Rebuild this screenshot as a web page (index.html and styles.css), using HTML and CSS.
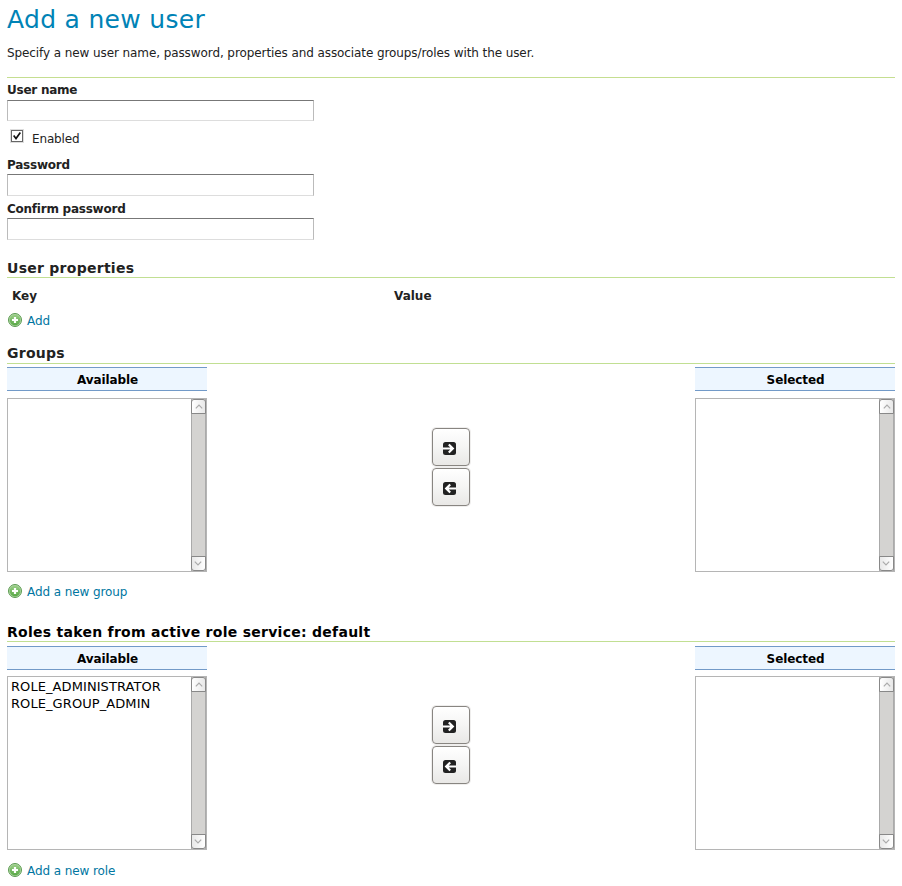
FILE: index.html
```html
<!DOCTYPE html>
<html lang="en">
<head>
<meta charset="utf-8">
<title>Add a new user</title>
<link rel="stylesheet" href="styles.css">
</head>
<body>
<svg class="defs" width="0" height="0">
  <defs>
    <linearGradient id="green" x1="0" y1="0" x2="0" y2="1"><stop offset="0" stop-color="#9bcf88"/><stop offset="1" stop-color="#58a845"/></linearGradient>
    <symbol id="plus" viewBox="0 0 14 14"><circle cx="7" cy="7" r="6.5" fill="#b5d9a9" stroke="#5b9a50"/><circle cx="7" cy="7" r="5.4" fill="url(#green)"/><path d="M7 4v6M4 7h6" stroke="#fff" stroke-width="2.2"/></symbol>
    <symbol id="arrow" viewBox="0 0 13 13"><rect width="13" height="13" rx="2.5" fill="#222"/><path d="M0 6.5h9.5M5.8 2.5l4 4-4 4" fill="none" stroke="#fff" stroke-width="2.2"/></symbol>
    <symbol id="chevron" viewBox="0 0 8 5"><path d="M.8 4.3L4 1.1l3.2 3.2" fill="none" stroke="#aaa" stroke-width="1.2"/></symbol>
  </defs>
</svg>
<main>
  <h1><span>Add a new user</span></h1>
  <p class="intro"><span>Specify a new user name, password, properties and associate groups/roles with the user.</span></p>
  <form>
    <label class="label" for="name">User name</label>
    <input class="field first" id="name" type="text">
    <label class="check"><span class="box"><svg viewBox="0 0 12 12"><path d="M2 5.5L4.8 9 10 1.8" fill="none" stroke="#111" stroke-width="2"/></svg></span><span>Enabled</span></label>
    <label class="label" for="pass">Password</label>
    <input class="field" id="pass" type="password">
    <label class="label" for="confirm">Confirm password</label>
    <input class="field" id="confirm" type="password">

    <h2 class="props">User properties</h2>
    <div class="columns"><b>Key</b><b>Value</b></div>
    <a class="add"><svg><use href="#plus"/></svg><span>Add</span></a>

    <h2 class="groups">Groups</h2>
    <section class="palette">
      <div class="side"><h3>Available</h3><div class="list"><div class="options"></div><div class="bar"><i><svg><use href="#chevron"/></svg></i><i class="down"><svg><use href="#chevron"/></svg></i></div></div></div>
      <div class="moves"><button type="button"><svg><use href="#arrow"/></svg></button><button type="button" class="back"><svg><use href="#arrow"/></svg></button></div>
      <div class="side"><h3>Selected</h3><div class="list"><div class="options"></div><div class="bar"><i><svg><use href="#chevron"/></svg></i><i class="down"><svg><use href="#chevron"/></svg></i></div></div></div>
    </section>
    <a class="add group-link"><svg><use href="#plus"/></svg><span>Add a new group</span></a>

    <h2 class="roles"><span>Roles taken from active role service: default</span></h2>
    <section class="palette role-palette">
      <div class="side"><h3>Available</h3><div class="list"><div class="options"><div>ROLE_ADMINISTRATOR</div><div>ROLE_GROUP_ADMIN</div></div><div class="bar"><i><svg><use href="#chevron"/></svg></i><i class="down"><svg><use href="#chevron"/></svg></i></div></div></div>
      <div class="moves"><button type="button"><svg><use href="#arrow"/></svg></button><button type="button" class="back"><svg><use href="#arrow"/></svg></button></div>
      <div class="side"><h3>Selected</h3><div class="list"><div class="options"></div><div class="bar"><i><svg><use href="#chevron"/></svg></i><i class="down"><svg><use href="#chevron"/></svg></i></div></div></div>
    </section>
    <a class="add role-link"><svg><use href="#plus"/></svg><span>Add a new role</span></a>
  </form>
</main>
</body>
</html>
```
FILE: styles.css
```css
* { box-sizing: border-box; }
body { margin: 0; background: #fff; color: #222; font: 12px/16px "DejaVu Sans", sans-serif; letter-spacing: -.09px; }
.defs { position: absolute; }
svg { display: block; }
main { width: 888px; margin-left: 7px; }
h1 { margin: 0; height: 45px; padding-top: 5px; font-size: 25px; line-height: 30px; font-weight: 400; color: #0083b6; letter-spacing: .3px; }
.intro { margin: 0; height: 32px; }
form { display: block; border-top: 1px solid #c5de90; padding-top: 4px; }
.label { display: block; height: 17px; font-weight: 700; letter-spacing: -.24px; }
.field { display: block; width: 307px; height: 22px; margin: 0 0 5px; padding: 2px; border: 1px solid #bbb; border-top-color: #777; border-bottom-color: #ddd; background: #fff; font: inherit; }
.first { margin: 1px 0 0; height: 21px; }
.check { display: flex; height: 36px; padding: 10px 0 0 3px; gap: 8px; letter-spacing: -.15px; }
.box { width: 14px; height: 14px; margin-top: -2px; border: 1px solid #ddd; background: #fff; }
.box svg { width: 12px; height: 12px; border: 1px solid #666; }
h2 { margin: 0; height: 20px; font-size: 14px; line-height: 20px; border-bottom: 1px solid #c1df92; letter-spacing: .27px; }
.props { margin-top: 18px; }
.columns { display: grid; grid-template-columns: 382px 1fr; padding: 10px 5px 0; height: 35px; letter-spacing: 0; }
.add { display: flex; align-items: center; gap: 5px; height: 16px; padding-left: 1px; color: #0076a1; }
.add svg { width: 14px; height: 14px; margin-top: -2px; }
.groups { margin-top: 15px; line-height: 18px; }
.palette { display: flex; justify-content: space-between; margin-top: 3px; height: 205px; }
.side { width: 200px; }
h3 { margin: 0; height: 24px; padding-left: 1px; border: solid #729ac8; border-width: 1px 0; background: #edf6ff; color: #000; font-size: 12px; line-height: 24px; text-align: center; letter-spacing: -.1px; }
.list { display: flex; height: 174px; margin-top: 7px; border: 1px solid #b5b5b5; }
.options { flex: 1; padding: 1px 3px; color: #000; font-size: 13px; line-height: 17px; letter-spacing: .08px; }
.bar { display: flex; flex-direction: column; justify-content: space-between; width: 15px; background: #d4d3d1; border: solid #aaa; border-width: 0 1px; }
.bar i { display: flex; align-items: center; justify-content: center; width: 15px; height: 15px; margin-left: -1px; border: 1px solid #888; border-radius: 3px 3px 0 0; background: linear-gradient(90deg, #fff, #e8e8e8); }
.bar svg { width: 8px; height: 5px; }
.bar .down { transform: rotate(180deg); }
.moves { display: flex; flex-direction: column; gap: 2px; padding-top: 61px; margin-right: 1px; }
button { width: 38px; height: 38px; padding: 3px 3px 0 0; border: 1px solid #888581; border-radius: 4px; background: linear-gradient(#fff, #f5f5f4 50%, #e9e8e6); display: flex; align-items: center; justify-content: center; box-shadow: 0 0 0 1px #efeeed; }
button svg { width: 13px; height: 13px; }
.back svg { transform: scaleX(-1); }
.group-link { margin-top: 12px; }
.roles { margin-top: 22px; color: #000; }
.role-palette { margin-top: 4px; height: 204px; }
.role-palette .list { margin-top: 6px; }
.role-palette .moves { padding-top: 60px; }
.role-link { margin-top: 13px; }
```
